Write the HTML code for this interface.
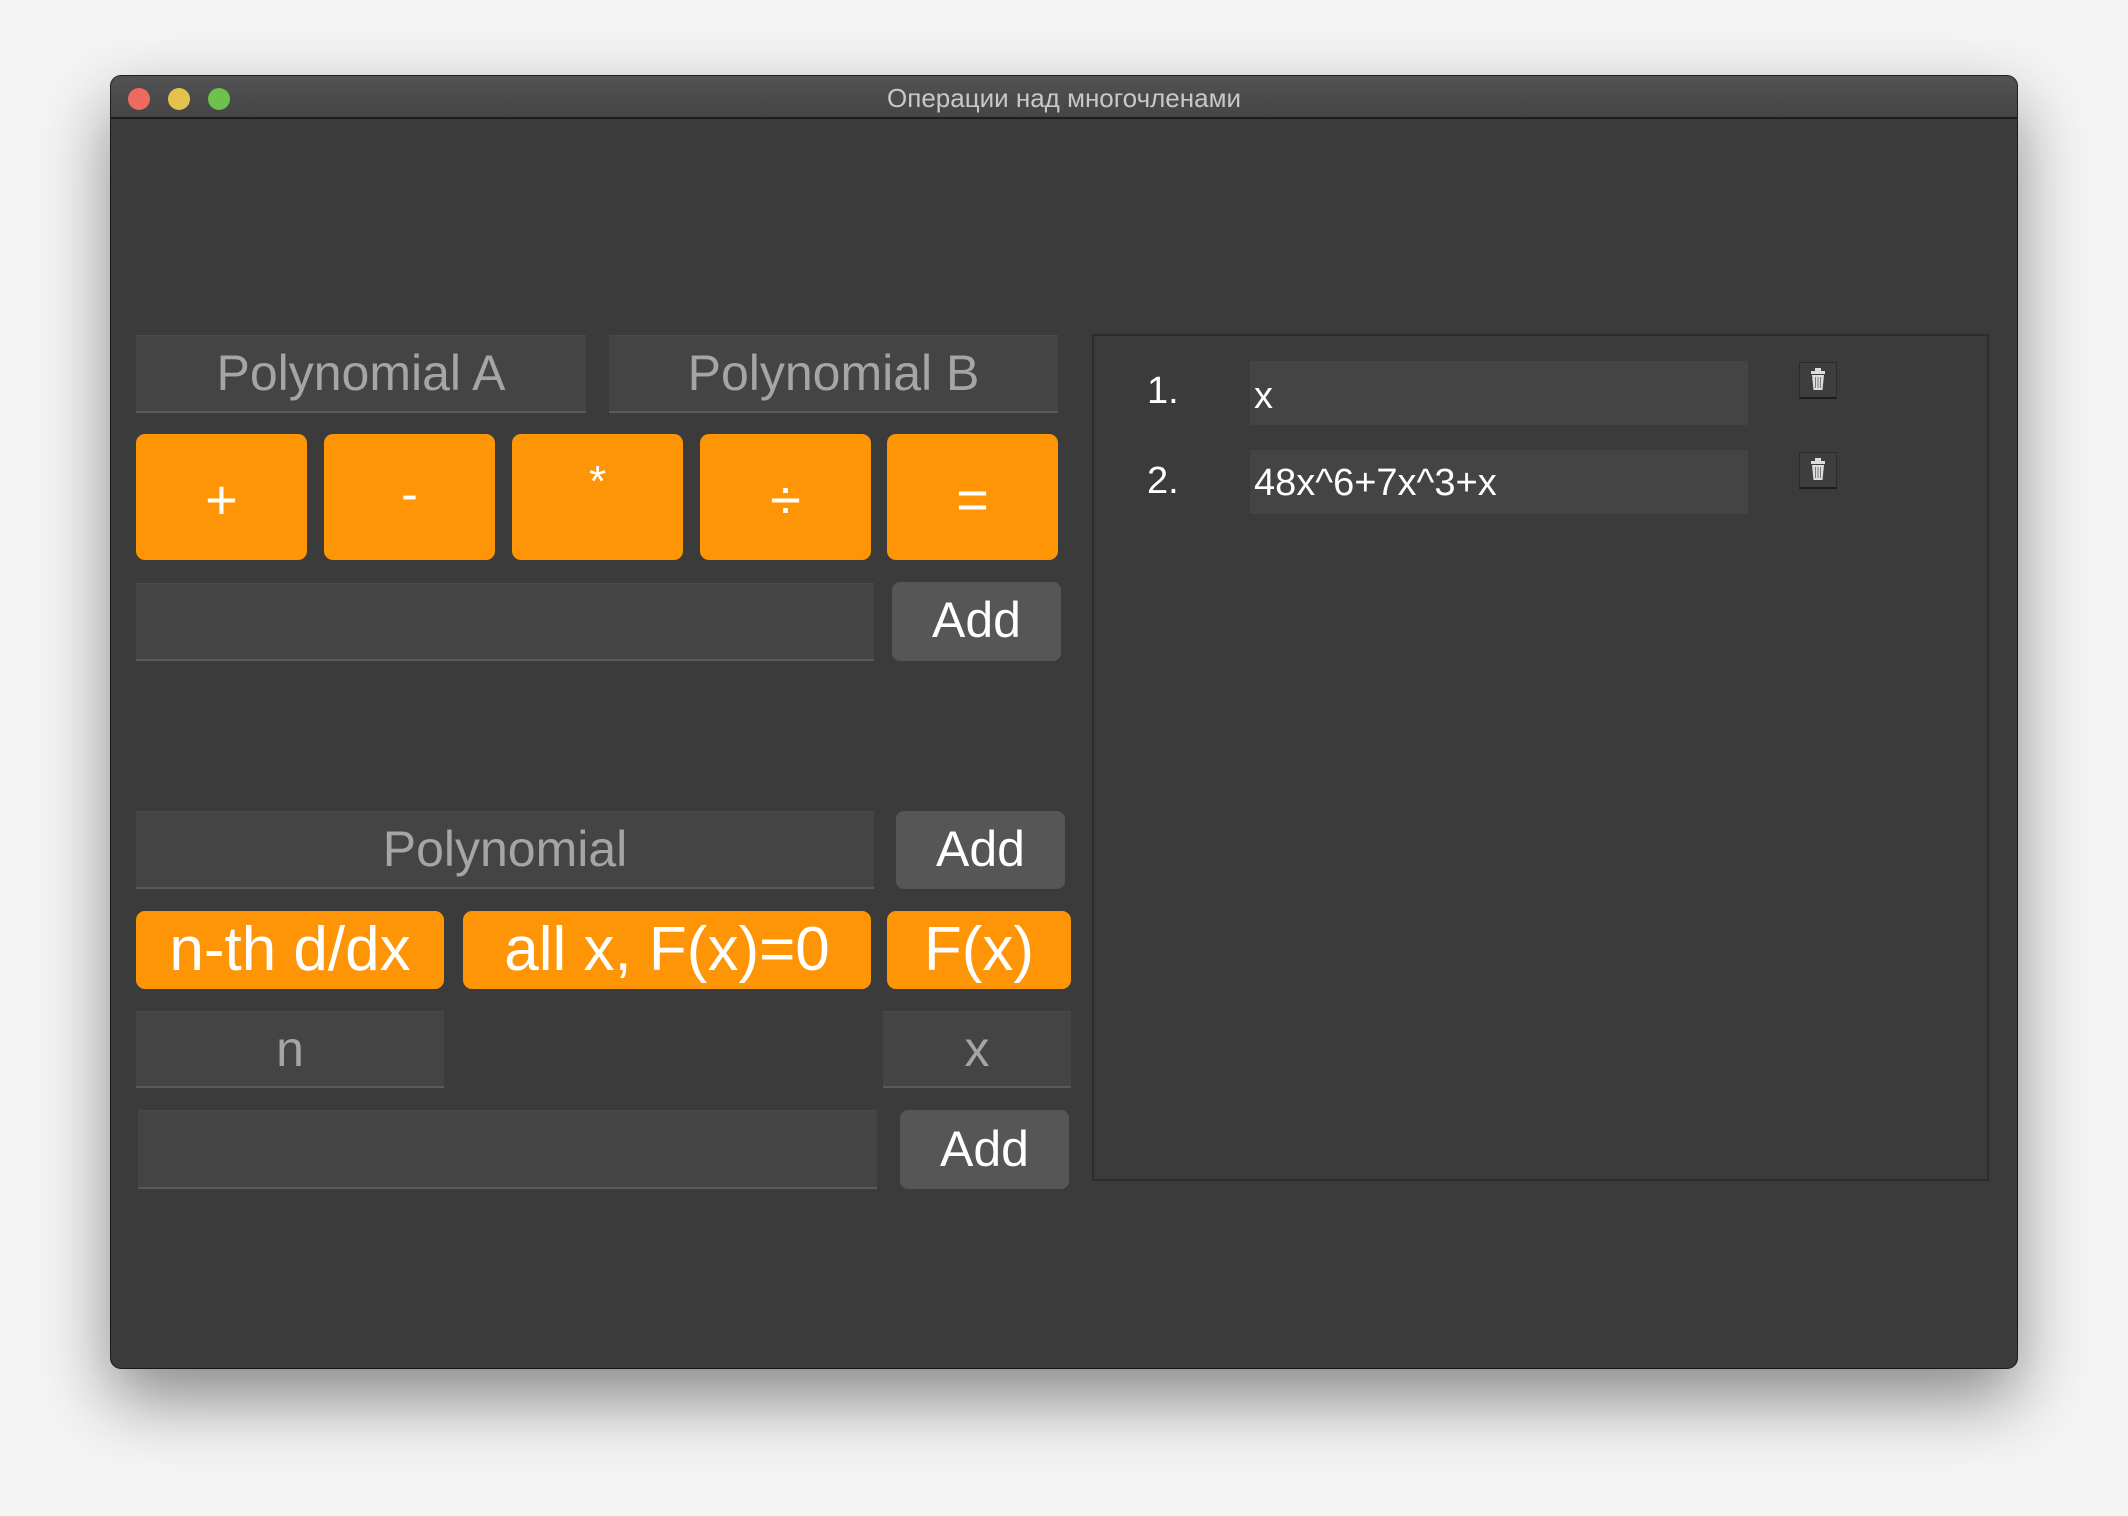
<!DOCTYPE html>
<html><head><meta charset="utf-8"><style>
*{margin:0;padding:0;box-sizing:border-box}
body{width:2128px;height:1516px;background:#f4f4f4;position:relative;overflow:hidden;font-family:"Liberation Sans","DejaVu Sans",sans-serif}
.win{position:absolute;left:111px;top:76px;width:1906px;height:1292px;background:#3b3b3b;border-radius:10px;box-shadow:0 30px 70px rgba(0,0,0,.45),0 0 0 1px #222;overflow:hidden}
.tb{position:absolute;left:0;top:0;width:100%;height:43px;background:linear-gradient(#525252,#454545);border-bottom:2px solid #1e1e1e;text-align:center;color:#c8c8c8;font-size:26px;line-height:45px}
.dot{position:absolute;top:12px;width:22px;height:22px;border-radius:50%}
.a{position:absolute}
.fld{position:absolute;background:#444;border-bottom:2px solid #5a5a5a;border-top:1px solid #4a4a4a;color:#a5a5a5;font-size:50px;text-align:center}
.or{position:absolute;background:#fe9507;border-radius:9px;color:#fff;text-align:center}
.btn{position:absolute;background:#565656;border-radius:8px;color:#fff;font-size:50px;text-align:center}
.trash{position:absolute;width:38px;height:37px;background:#3e3e3e;border:1px solid #2a2a2a;border-bottom:2px solid #1c1c1c}
</style></head><body>
<div class="win">
<div class="tb">Операции над многочленами
<div class="dot" style="left:17px;background:#ee6a5f"></div>
<div class="dot" style="left:57px;background:#e3c24f"></div>
<div class="dot" style="left:97px;background:#6cc24a"></div>
</div>
</div>
<div class="fld" style="left:136px;top:335px;width:450px;height:78px;line-height:74px">Polynomial A</div>
<div class="fld" style="left:609px;top:335px;width:449px;height:78px;line-height:74px">Polynomial B</div>
<div class="or" style="left:136px;top:434px;width:171px;height:126px;font-size:56px;line-height:132px">+</div>
<div class="or" style="left:324px;top:434px;width:171px;height:126px;font-size:50px;line-height:120px">-</div>
<div class="or" style="left:512px;top:434px;width:171px;height:126px;font-size:44px;line-height:96px">*</div>
<div class="or" style="left:700px;top:434px;width:171px;height:126px;font-size:56px;line-height:132px">÷</div>
<div class="or" style="left:887px;top:434px;width:171px;height:126px;font-size:56px;line-height:132px">=</div>
<div class="fld" style="left:136px;top:583px;width:738px;height:78px"></div>
<div class="btn" style="left:892px;top:582px;width:169px;height:79px;line-height:76px">Add</div>
<div class="fld" style="left:136px;top:811px;width:738px;height:78px;line-height:74px">Polynomial</div>
<div class="btn" style="left:896px;top:811px;width:169px;height:78px;line-height:76px">Add</div>
<div class="or" style="left:136px;top:911px;width:308px;height:78px;font-size:62px;line-height:78px">n-th d/dx</div>
<div class="or" style="left:463px;top:911px;width:408px;height:78px;font-size:62px;line-height:78px">all x, F(x)=0</div>
<div class="or" style="left:887px;top:911px;width:184px;height:78px;font-size:62px;line-height:78px">F(x)</div>
<div class="fld" style="left:136px;top:1011px;width:308px;height:77px;line-height:74px">n</div>
<div class="fld" style="left:883px;top:1011px;width:188px;height:77px;line-height:74px">x</div>
<div class="fld" style="left:138px;top:1110px;width:739px;height:79px"></div>
<div class="btn" style="left:900px;top:1110px;width:169px;height:79px;line-height:78px">Add</div>
<div class="a" style="left:1092px;top:334px;width:897px;height:847px;border:2px solid #2c2c2c;background:#3b3b3b"></div>
<div class="a" style="left:1147px;top:370px;color:#fff;font-size:38px">1.</div>
<div class="a" style="left:1250px;top:361px;width:498px;height:64px;background:#444;color:#fff;font-size:38px;padding:14px 0 0 4px">x</div>
<div class="a" style="left:1147px;top:460px;color:#fff;font-size:38px">2.</div>
<div class="a" style="left:1250px;top:450px;width:498px;height:64px;background:#444;color:#fff;font-size:38px;padding:12px 0 0 4px">48x^6+7x^3+x</div>
<div class="trash" style="left:1799px;top:362px"><svg width="36" height="34" viewBox="0 0 36 34"><rect x="15" y="5" width="6" height="3" fill="#ddd"/><rect x="11" y="8" width="14" height="3" fill="#ddd"/><path d="M12 12h12l-1.5 15h-9z" fill="#ddd"/><path d="M15.5 14v11M18 14v11M20.5 14v11" stroke="#777" stroke-width="1"/></svg></div>
<div class="trash" style="left:1799px;top:452px"><svg width="36" height="34" viewBox="0 0 36 34"><rect x="15" y="5" width="6" height="3" fill="#ddd"/><rect x="11" y="8" width="14" height="3" fill="#ddd"/><path d="M12 12h12l-1.5 15h-9z" fill="#ddd"/><path d="M15.5 14v11M18 14v11M20.5 14v11" stroke="#777" stroke-width="1"/></svg></div>
</body></html>
